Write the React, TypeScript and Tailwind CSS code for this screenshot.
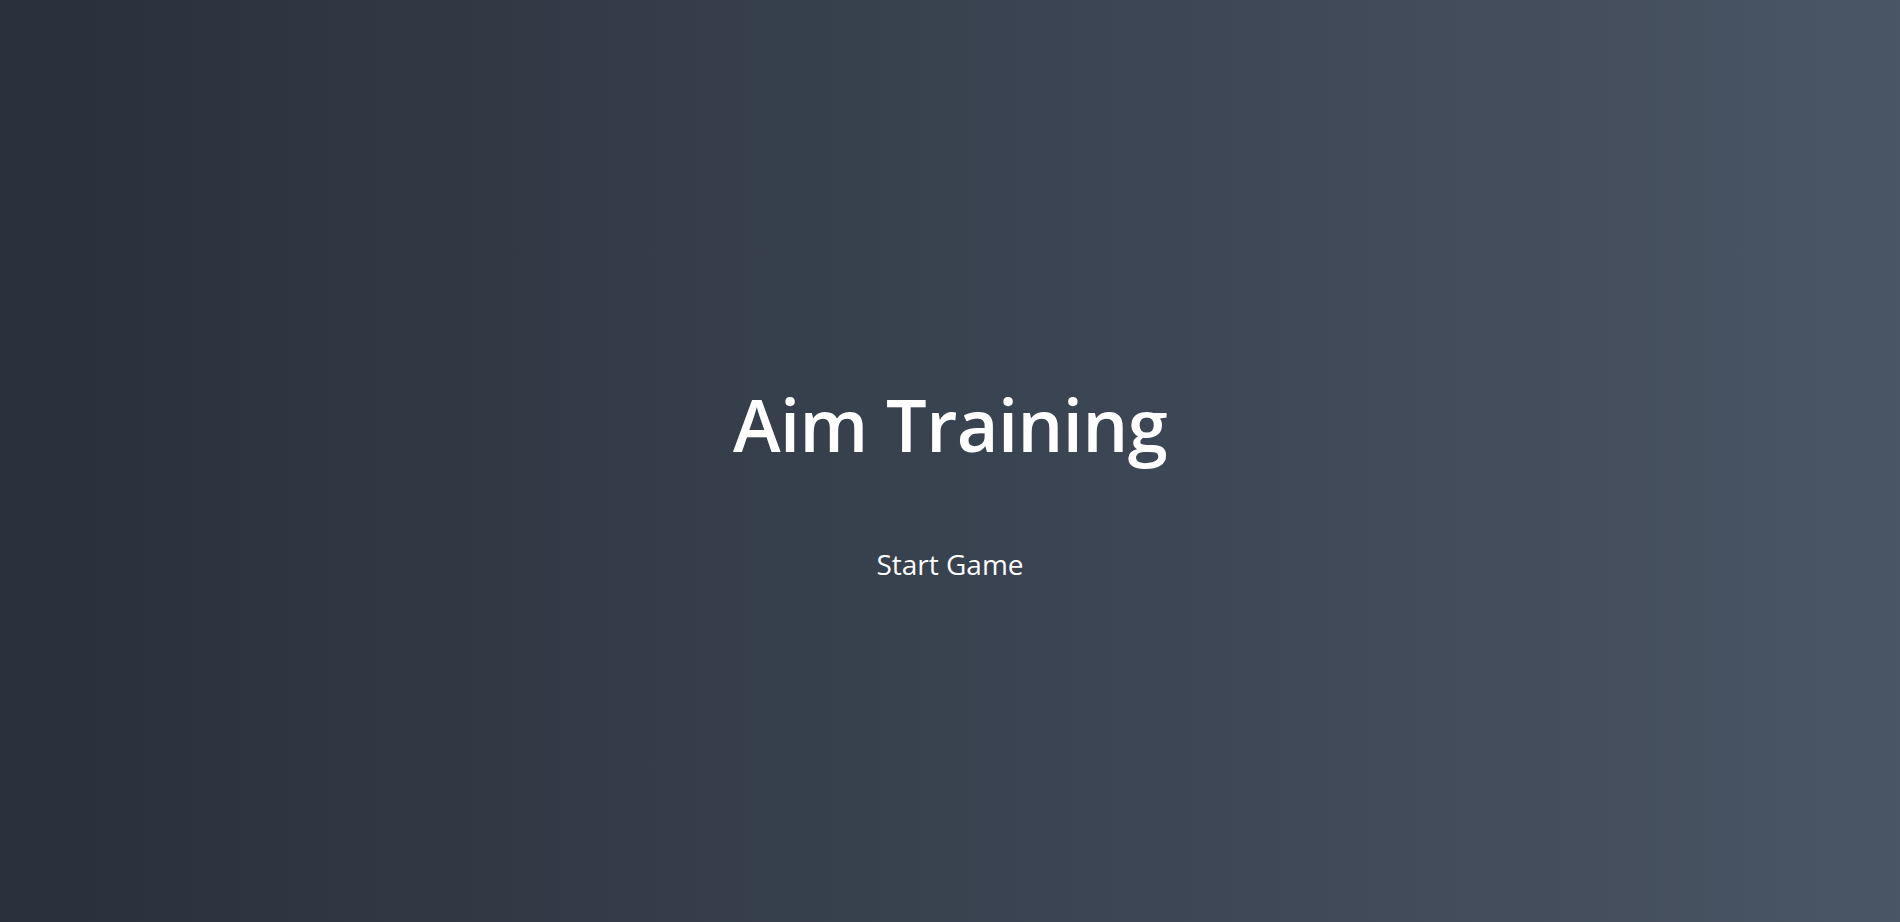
export default function App() {
  return (
    <div
      className="flex h-screen w-full flex-col items-center justify-center bg-gradient-to-r from-[#29303b] to-[#4a5565] pt-[51px] text-white"
      style={{ fontFamily: '"Open Sans", sans-serif' }}
    >
      <h1 className="text-[72px] font-semibold leading-[1.2] tracking-[-0.5px]">Aim Training</h1>
      <button className="mt-[70px] px-4 py-2 text-[28px] leading-[1.4] text-white">Start Game</button>
    </div>
  );
}
